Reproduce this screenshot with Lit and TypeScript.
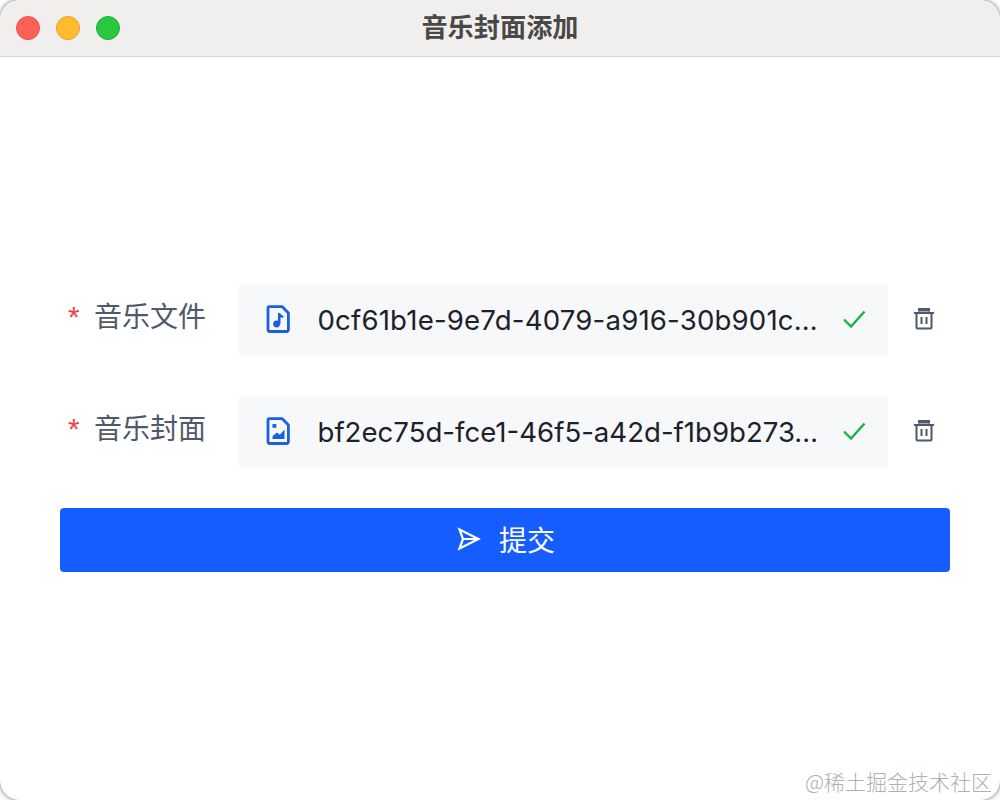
import { LitElement, html, css, svg } from "lit";
import { customElement } from "lit/decorators.js";

const fileIcon = (inner: unknown) => html`<svg class="ficon" viewBox="0 0 24 28" width="24" height="28" fill="none">
  <path d="M3.5 1.6H16l6.4 6.4v17a1.5 1.5 0 0 1-1.5 1.5H3.5A1.5 1.5 0 0 1 2 25V3.1a1.5 1.5 0 0 1 1.5-1.5Z" stroke="#1c5fe0" stroke-width="2.8" stroke-linejoin="round"/>
  ${inner}
</svg>`;
const music = svg`<path d="M13.2 9v10" stroke="#1c5fe0" stroke-width="2.6"/><path d="M13.2 9c.6 1.8 1.6 2.4 3.2 2.6" stroke="#1c5fe0" stroke-width="2.4" stroke-linecap="round"/><circle cx="10.6" cy="19" r="3.4" fill="#1c5fe0"/>`;
const image = svg`<rect x="6.5" y="7" width="3.8" height="3.8" fill="#1c5fe0"/><path d="M6.5 22v-2.8l4.4-3.6 3 2.2 4.6-5.2V22Z" fill="#1c5fe0"/>`;

@customElement("app-root")
export class AppRoot extends LitElement {
  static styles = css`
    :host { display: block; width: 1000px; height: 800px; background: #fff; overflow: hidden; font-family: Inter, "Noto Sans CJK SC", sans-serif; }
    .window { position: relative; height: 800px; border-radius: 20px; overflow: hidden; background: #fff; box-shadow: 0 0 5px rgba(0,0,0,.6); display: flex; flex-direction: column; }
    .titlebar { height: 56px; flex: none; background: #f1efee; border-bottom: 1px solid #d9d8d7; display: flex; align-items: center; justify-content: center; position: relative; }
    .lights { position: absolute; left: 16px; top: 16px; display: flex; gap: 16px; }
    .light { width: 24px; height: 24px; border-radius: 50%; box-sizing: border-box; border: 1px solid; }
    .red { background: #ff5f57; border-color: #e5544d; }
    .yellow { background: #febc2e; border-color: #e0a028; }
    .green { background: #28c840; border-color: #1fae34; }
    .title { font: 700 26.2px "Noto Sans CJK SC", sans-serif; color: #4a4846; padding-bottom: 5px; }
    main { flex: 1; padding: 0 50px 2px 60px; display: flex; flex-direction: column; justify-content: center; gap: 40px; }
    .row { display: flex; height: 72px; }
    .label { width: 178px; flex: none; display: flex; align-items: flex-start; padding-top: 11px; box-sizing: border-box; font: 400 28px/40px "Noto Sans CJK SC", sans-serif; color: #4e5969; }
    .star { width: 35px; flex: none; padding: 2px 0 0 8px; box-sizing: border-box; color: #f53f3f; font: 400 30px/40px "Liberation Sans", sans-serif; margin-right: -1px; }
    .file { width: 650px; flex: none; background: #f6f8fa; border-radius: 4px; display: flex; align-items: center; padding-left: 28px; box-sizing: border-box; }
    .ficon { flex: none; margin-top: -2px; }
    .name { width: 500px; margin-left: 27.5px; margin-right: 0.5px; font: 400 27.6px Inter, "Noto Sans CJK SC", sans-serif; color: #1d2129; white-space: nowrap; flex: none; }
    .name.wide { letter-spacing: 0.18px; }
    .check { margin-left: 24px; flex: none; margin-top: -2px; }
    .del { margin-left: 25px; flex: none; margin-top: 1px; }
    button { height: 64px; width: 890px; border: 0; border-radius: 4px; background: #165dff; color: #fff; display: flex; align-items: center; justify-content: center; gap: 18px; font: 400 28px "Noto Sans CJK SC", sans-serif; padding: 0 0 1px; }
    .mark { position: absolute; right: 8px; bottom: 4px; font: 300 21px "Noto Sans CJK SC", sans-serif; color: #b0b0b0; }
  `;

  private entry(label: string, icon: unknown, name: string, wide = false) {
    return html`<div class="row">
      <div class="label"><span class="star">*</span><span>${label}</span></div>
      <div class="file">
        ${fileIcon(icon)}
        <span class="name ${wide ? "wide" : ""}">${name}</span>
        <svg class="check" width="24" height="20" viewBox="0 0 24 20" fill="none"><path d="M2 10.5l7 7L22.5 2.5" stroke="#17b34a" stroke-width="2.4"/></svg>
      </div>
      <svg class="del" width="22" height="72" viewBox="0 0 22 72" fill="none">
        <path d="M1 28h20" stroke="#4e5969" stroke-width="2"/><path d="M6 26.5v-2.5h10v2.5" stroke="#4e5969" stroke-width="2" fill="#4e5969"/>
        <path d="M3.5 28v14.5a1 1 0 0 0 1 1h13a1 1 0 0 0 1-1V28" stroke="#4e5969" stroke-width="2"/>
        <path d="M8.5 32v7M13.5 32v7" stroke="#4e5969" stroke-width="2"/>
      </svg>
    </div>`;
  }

  render() {
    return html`<div class="window">
      <header class="titlebar">
        <div class="lights"><i class="light red"></i><i class="light yellow"></i><i class="light green"></i></div>
        <span class="title">音乐封面添加</span>
      </header>
      <main>
        ${this.entry("音乐文件", music, "0cf61b1e-9e7d-4079-a916-30b901c…", true)}
        ${this.entry("音乐封面", image, "bf2ec75d-fce1-46f5-a42d-f1b9b273…")}
        <button>
          <svg width="26" height="24" viewBox="0 0 26 24" fill="none"><path d="M4.5 2.5 23.5 12 4.5 21.5 8 12Z M8 12H23.5" stroke="#fff" stroke-width="2.2" stroke-linejoin="miter"/></svg>
          <span>提交</span>
        </button>
      </main>
      <div class="mark">@稀土掘金技术社区</div>
    </div>`;
  }
}
